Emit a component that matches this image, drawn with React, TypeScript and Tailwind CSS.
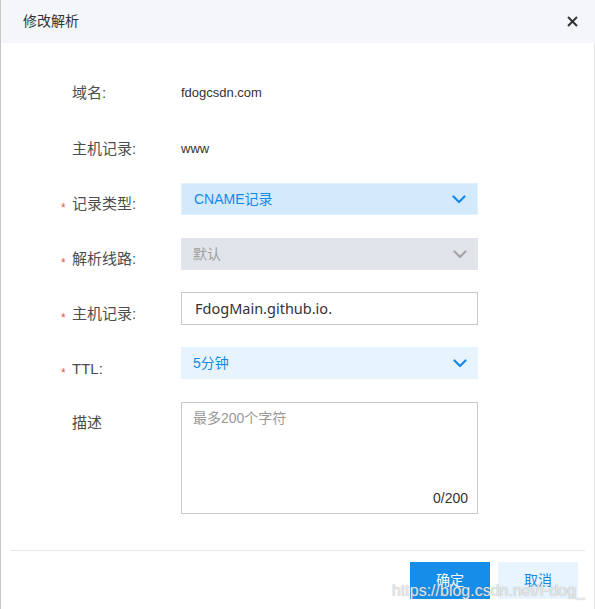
import React from "react";

const CJK = "font-['Liberation_Sans','Noto_Sans_CJK_SC',sans-serif]";

function Chevron({ color }: { color: string }) {
  return (
    <svg width="14" height="9" viewBox="0 0 14 9" fill="none">
      <polyline points="1.5,1.5 7,7 12.5,1.5" stroke={color} strokeWidth="2.2" strokeLinecap="round" strokeLinejoin="round" />
    </svg>
  );
}

function Label({ text, required, top }: { text: string; required?: boolean; top: string }) {
  return (
    <div className={`flex w-[120px] h-[32px] shrink-0 overflow-visible ${top}`}>
      <div className="w-[11px] h-[20px] shrink-0 text-[12px] leading-[20px] text-[#f0533f] pt-[4px]">{required ? "*" : ""}</div>
      <div className="text-[15px] leading-[20px] text-[#4d4d4d]">{text}</div>
    </div>
  );
}

export default function App() {
  return (
    <div className={`relative w-[595px] h-[609px] bg-white border-l border-[#c6c6c6] ${CJK} overflow-hidden`}>
      <div className="h-[43px] bg-[#f5f6fa] flex items-center justify-between pl-[22px] pr-[17px]">
        <span className="text-[14px] text-[#333]">修改解析</span>
        <svg width="11" height="11" viewBox="0 0 11 11">
          <line x1="1" y1="1" x2="10" y2="10" stroke="#333" strokeWidth="2" />
          <line x1="10" y1="1" x2="1" y2="10" stroke="#333" strokeWidth="2" />
        </svg>
      </div>
      <div className="border-r border-[#e2e2e2] h-[566px] flex flex-col">
        <div className="pl-[60px] pt-[34px] flex flex-col">
          <div className="flex items-center h-8">
            <div className="flex w-[120px]">
              <div className="w-[11px]" />
              <div className="text-[15px] leading-[20px] text-[#4d4d4d]">域名:</div>
            </div>
            <span className="text-[13px] text-[#333]">fdogcsdn.com</span>
          </div>
          <div className="flex items-center h-8 mt-6">
            <div className="flex w-[120px]">
              <div className="w-[11px]" />
              <div className="text-[15px] leading-[20px] text-[#4d4d4d]">主机记录:</div>
            </div>
            <span className="text-[13px] text-[#333]">www</span>
          </div>
          <div className="flex items-start h-[32px] mt-[18px]">
            <Label text="记录类型:" required top="pt-[11px]" />
            <div className="w-[297px] h-[32px] bg-[#d3e9fc] border border-[#e3f1fd] flex items-center justify-between pl-[12px] pr-[11px]">
              <span className="text-[14px] text-[#1589e8]">CNAME记录</span>
              <Chevron color="#1589e8" />
            </div>
          </div>
          <div className="flex items-start h-[32px] mt-[23px]">
            <Label text="解析线路:" required top="pt-[11px]" />
            <div className="w-[297px] h-[32px] bg-[#e1e4eb] flex items-center justify-between pl-[12px] pr-[11px]">
              <span className="text-[14px] text-[#a0a0a0]">默认</span>
              <Chevron color="#a6a6a6" />
            </div>
          </div>
          <div className="flex items-start h-[32px] mt-[22px]">
            <Label text="主机记录:" required top="pt-[12px]" />
            <div className="w-[297px] h-[33px] bg-white border border-[#c9c9c9] flex items-center pl-[13px]">
              <span className="text-[14.5px] text-[#333] font-['Noto_Sans','Liberation_Sans',sans-serif]">FdogMain.github.io.</span>
            </div>
          </div>
          <div className="flex items-start h-[32px] mt-[23px]">
            <Label text="TTL:" required top="pt-[12px]" />
            <div className="w-[297px] h-[32px] bg-[#e8f4fd] flex items-center justify-between pl-[12px] pr-[11px]">
              <span className="text-[14px] text-[#1589e8]">5分钟</span>
              <Chevron color="#1589e8" />
            </div>
          </div>
          <div className="flex items-start h-[112px] mt-[23px]">
            <Label text="描述" top="pt-[11px]" />
            <div className="w-[297px] h-[112px] bg-white border border-[#c9c9c9] flex flex-col justify-between pl-[11px] pr-[9px] pt-[5px] pb-[4px]">
              <span className="text-[14px] text-[#999]">最多200个字符</span>
              <span className="self-end text-[14px] text-[#333]">0/200</span>
            </div>
          </div>
        </div>
        <div className="mx-[9px] mt-[36px] h-px bg-[#e8e8e8]" />
        <div className="flex justify-end gap-[8px] pr-[16px] mt-[11px]">
          <button className="w-[80px] h-[37px] bg-[#168de9] text-white text-[14px]">确定</button>
          <button className="w-[80px] h-[37px] bg-[#e8f4fe] text-[#1589e8] text-[14px]">取消</button>
        </div>
      </div>
      <div className="absolute right-[10px] bottom-[8px] text-[16px] leading-[20px] text-white/80 font-['Liberation_Sans',sans-serif] [text-shadow:0_0_1px_rgba(120,120,120,0.9)] pointer-events-none">
        https://blog.csdn.net/Fdog_
      </div>
    </div>
  );
}
